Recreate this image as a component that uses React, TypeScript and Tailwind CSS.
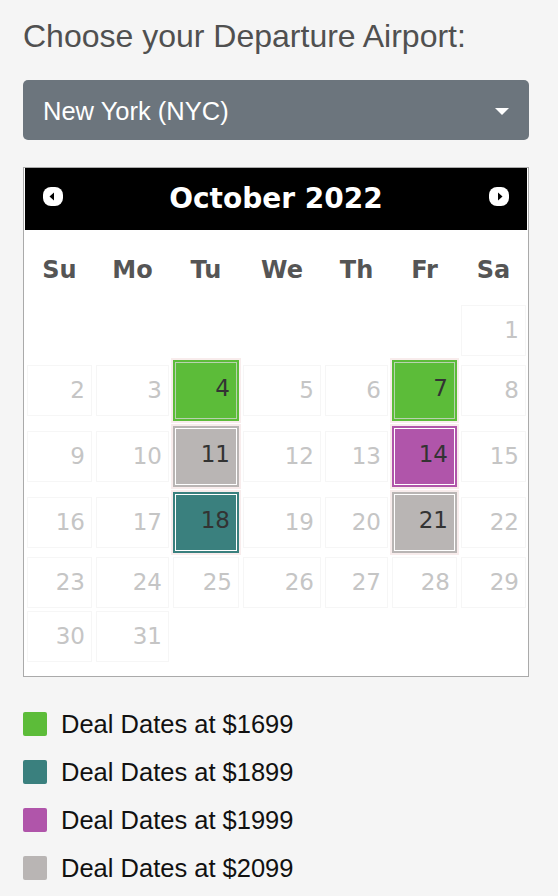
import React from "react";

type Deal = { bg: string; line: string };

const deals: Record<number, Deal> = {
  4: { bg: "bg-[#5cbc39] border-[#5cbc39]", line: "border-[#b9d2b0]" },
  7: { bg: "bg-[#5cbc39] border-[#5cbc39]", line: "border-[#b9d2b0]" },
  11: { bg: "bg-[#b9b5b4] border-[#b9b5b4]", line: "border-white" },
  14: { bg: "bg-[#b055aa] border-[#b055aa]", line: "border-white" },
  18: { bg: "bg-[#3a807e] border-[#3a807e]", line: "border-white" },
  21: { bg: "bg-[#b9b5b4] border-[#b9b5b4]", line: "border-white" },
};

const legend = [
  { color: "bg-[#5cbc39]", label: "Deal Dates at $1699" },
  { color: "bg-[#3a807e]", label: "Deal Dates at $1899" },
  { color: "bg-[#b055aa]", label: "Deal Dates at $1999" },
  { color: "bg-[#b9b5b4]", label: "Deal Dates at $2099" },
];

const days = ["Su", "Mo", "Tu", "We", "Th", "Fr", "Sa"];

const cols = "grid grid-cols-[65px_73px_66px_78px_63px_65px_65px] gap-x-[4px]";

function NavIcon({ dir }: { dir: "prev" | "next" }) {
  return (
    <svg width="20" height="19" viewBox="0 0 20 19" className="-mt-[5px]">
      <rect x="0" y="0" width="20" height="19" rx="8" fill="#fff" />
      {dir === "prev" ? (
        <polygon points="11,5.5 11,13.5 6.5,9.5" fill="#000" />
      ) : (
        <polygon points="9,5.5 9,13.5 13.5,9.5" fill="#000" />
      )}
    </svg>
  );
}

function DayCell({ day }: { day: number | null }) {
  if (day === null) return <div />;
  const deal = deals[day];
  if (deal) {
    return (
      <div className="h-full -ml-[2px] -mr-[2px] border-2 border-[#f8ecec]">
        <div className={`h-full border-2 ${deal.bg}`}>
          <div
            className={`h-full border ${deal.line} flex items-center justify-end pr-[6px] pb-[5px] text-[#333]`}
          >
            {day}
          </div>
        </div>
      </div>
    );
  }
  return (
    <div className="self-center h-[51px] border border-[#f6f6f6] flex items-center justify-end pr-[6px] text-[#c5c5c5]">
      {day}
    </div>
  );
}

export default function App() {
  const cells: (number | null)[] = [
    ...Array(6).fill(null),
    ...Array.from({ length: 31 }, (_, i) => i + 1),
  ];

  return (
    <div className="min-h-screen bg-[#f5f5f5] pt-[18px] font-['Liberation_Sans',Arial,sans-serif]">
      <div className="ml-[23px] w-[506px]">
        <h1 className="text-[32px] leading-[36px] text-[#505050]">
          Choose your Departure Airport:
        </h1>

        <div className="mt-[26px] h-[60px] rounded-[5px] bg-[#6c757d] flex items-center justify-between pl-[20px] pr-[20px]">
          <span className="text-[25.5px] leading-[30px] pt-[2px] text-white">New York (NYC)</span>
          <svg width="14" height="7" viewBox="0 0 14 7" className="mt-[3px]">
            <polygon points="0,0 14,0 7,7" fill="#fff" />
          </svg>
        </div>

        <div className="mt-[27px] border border-[#aaa] bg-white px-px pb-[13px] font-['DejaVu_Sans',Verdana,sans-serif]">
          <div className="h-[62px] bg-black flex items-center justify-between px-[18px]">
            <NavIcon dir="prev" />
            <span className="text-[28px] font-bold text-white">October 2022</span>
            <NavIcon dir="next" />
          </div>

          <div className="pl-[2px]">
            <div className={`${cols} h-[74px] pt-[6px] items-center`}>
              {days.map((d) => (
                <div key={d} className="text-center text-[24px] font-bold text-[#555]">
                  {d}
                </div>
              ))}
            </div>

            <div
              className={`${cols} grid-rows-[53px_65px_65px_65px_53px_53px] gap-y-[1px] text-[23px]`}
            >
              {cells.map((d, i) => (
                <DayCell key={i} day={d} />
              ))}
            </div>
          </div>
        </div>

        <div className="mt-[35px] flex flex-col gap-[24px]">
          {legend.map((l) => (
            <div key={l.label} className="flex items-center h-[24px] gap-[14px]">
              <span className={`w-[24px] h-[24px] rounded-[2px] ${l.color}`} />
              <span className="text-[25.5px] leading-[24px] text-[#111]">{l.label}</span>
            </div>
          ))}
        </div>
      </div>
    </div>
  );
}
